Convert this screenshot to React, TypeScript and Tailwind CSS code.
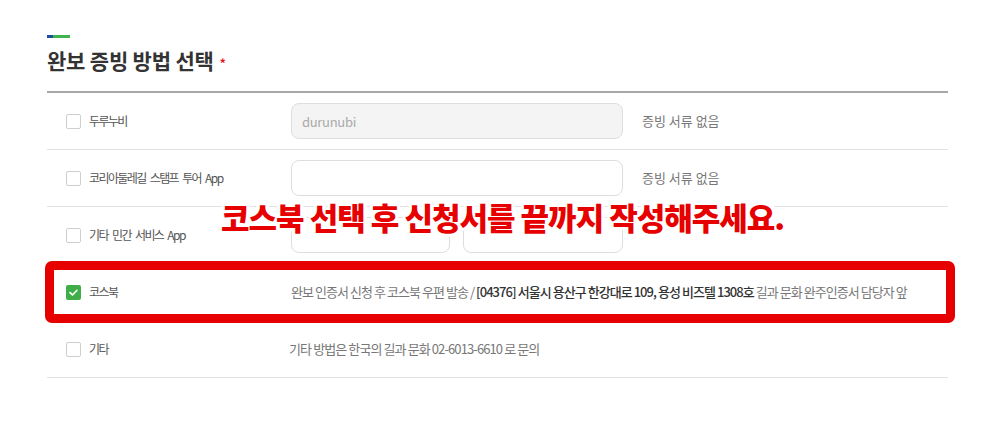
import React from "react";

type Row = {
  label: string;
  checked?: boolean;
  kind: "input" | "twoInputs" | "text" | "kosbook";
  value?: string;
  disabled?: boolean;
  note?: string;
  text?: string;
};

const ROWS: Row[] = [
  { label: "두루누비", kind: "input", value: "durunubi", disabled: true, note: "증빙 서류 없음" },
  { label: "코리아둘레길 스탬프 투어 App", kind: "input", note: "증빙 서류 없음" },
  { label: "기타 민간 서비스 App", kind: "twoInputs" },
  { label: "코스북", kind: "kosbook", checked: true },
  { label: "기타", kind: "text", text: "기타 방법은 한국의 길과 문화 02-6013-6610 로 문의" },
];

function Checkbox({ checked }: { checked?: boolean }) {
  if (checked) {
    return (
      <span className="flex h-[15px] w-[15px] items-center justify-center rounded-[2px] bg-[#3fae49]">
        <svg width="11" height="11" viewBox="0 0 12 12" fill="none">
          <path d="M2.2 6.2 L4.9 8.7 L9.8 3.6" stroke="#fff" strokeWidth="1.8" strokeLinecap="round" strokeLinejoin="round" />
        </svg>
      </span>
    );
  }
  return <span className="block h-[15px] w-[15px] rounded-[2px] border border-[#cfcfcf] bg-white" />;
}

function RowContent({ row }: { row: Row }) {
  if (row.kind === "input") {
    return (
      <div className="flex items-center">
        <input
          readOnly
          value=""
          placeholder={row.value ?? ""}
          className={
            "h-[36px] w-[332px] rounded-[8px] border border-[#dedede] px-[10px] text-[13px] tracking-[-0.3px] text-[#999] placeholder:text-[#aaa] outline-none " +
            (row.disabled ? "bg-[#f4f4f4]" : "bg-white")
          }
        />
        <span className="ml-[19px] text-[13px] text-[#777]">{row.note}</span>
      </div>
    );
  }
  if (row.kind === "twoInputs") {
    return (
      <div className="flex items-center gap-[13px]">
        <input readOnly className="h-[36px] w-[159px] rounded-[8px] border border-[#dedede] bg-white outline-none" />
        <input readOnly className="h-[36px] w-[160px] rounded-[8px] border border-[#dedede] bg-white outline-none" />
      </div>
    );
  }
  if (row.kind === "kosbook") {
    return (
      <p className="text-[13px] tracking-[-0.95px] text-[#777]">
        완보 인증서 신청 후 코스북 우편 발송 /{" "}
        <span className="font-medium text-[#333]">
          [04376] 서울시 용산구 한강대로 109, 용성 비즈텔 1308호
        </span>{" "}
        길과 문화 완주인증서 담당자 앞
      </p>
    );
  }
  return <p className="ml-[-2px] text-[13px] tracking-[-0.9px] text-[#777]">{row.text}</p>;
}

export default function App() {
  return (
    <div
      className="relative h-[422px] w-[1004px] bg-white"
      style={{ fontFamily: '"Noto Sans CJK KR", "Noto Sans", sans-serif' }}
    >
      <div className="pl-[47px] pr-[56px] pt-[35px]">
        <div className="flex h-[3px] w-[23px]">
          <span className="w-[6px] bg-[#1f4e9c]" />
          <span className="flex-1 bg-[#3fb34f]" />
        </div>
        <h2 className="mt-[7px] flex items-start text-[21px] font-bold leading-[30px] tracking-[-0.2px] text-[#333]">
          완보 증빙 방법 선택
          <span className="ml-[6px] mt-[3px] text-[12px] text-[#e0141e]">*</span>
        </h2>
        <div className="mt-[13px] h-[2px] bg-[#a8a8a8]" />
        <div>
          {ROWS.map((row) => (
            <div key={row.label} className="flex h-[57px] items-center border-b border-[#e2e2e2]">
              <div className="flex w-[244px] items-center gap-[8px] pl-[19px]">
                <Checkbox checked={row.checked} />
                <span className="text-[12px] tracking-[-1.6px] text-[#555] [word-spacing:3px]">{row.label}</span>
              </div>
              <RowContent row={row} />
            </div>
          ))}
        </div>
      </div>

      {/* highlight box around 코스북 row */}
      <div className="pointer-events-none absolute left-[45px] top-[261px] h-[62px] w-[910px] rounded-[7px] border-[9px] border-[#e60000]" />

      {/* overlay notice */}
      <p className="pointer-events-none absolute left-[221px] top-[200px] text-[31px] font-black leading-[34px] tracking-[-1px] text-[#e60000] [text-shadow:0_0_3px_#fff,3px_0_0_#fff,-3px_0_0_#fff,0_3px_0_#fff,0_-3px_0_#fff,3px_3px_0_#fff,-3px_-3px_0_#fff,3px_-3px_0_#fff,-3px_3px_0_#fff]">
        코스북 선택 후 신청서를 끝까지 작성해주세요.
      </p>
    </div>
  );
}
